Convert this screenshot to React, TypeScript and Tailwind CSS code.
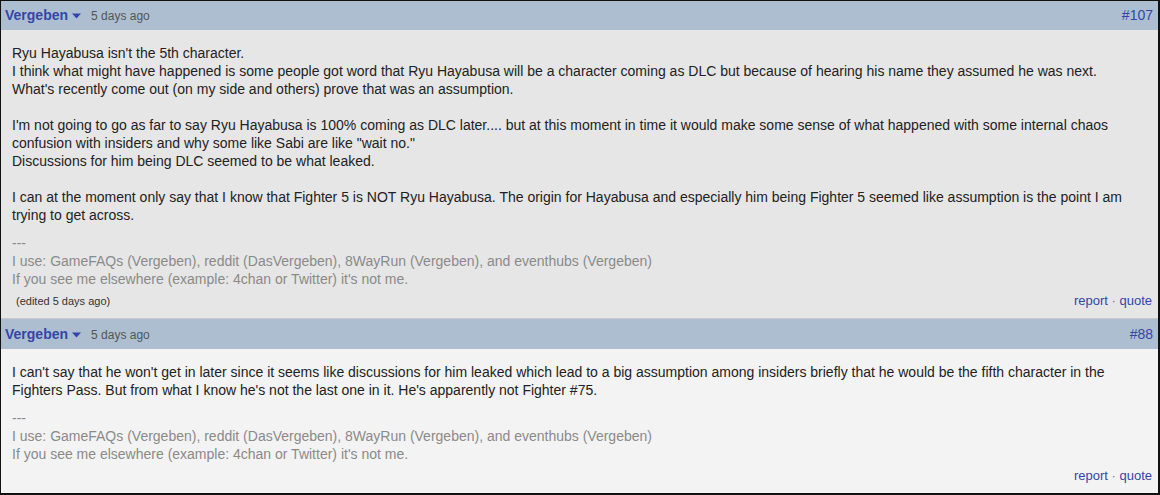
const posts = [
  {
    id: '#107',
    body: 'bg-[#e6e6e6]',
    lines: [
      "Ryu Hayabusa isn't the 5th character.",
      'I think what might have happened is some people got word that Ryu Hayabusa will be a character coming as DLC but because of hearing his name they assumed he was next.',
      "What's recently come out (on my side and others) prove that was an assumption.",
      '',
      "I'm not going to go as far to say Ryu Hayabusa is 100% coming as DLC later.... but at this moment in time it would make some sense of what happened with some internal chaos confusion with insiders and why some like Sabi are like \"wait no.\"",
      'Discussions for him being DLC seemed to be what leaked.',
      '',
      'I can at the moment only say that I know that Fighter 5 is NOT Ryu Hayabusa. The origin for Hayabusa and especially him being Fighter 5 seemed like assumption is the point I am trying to get across.',
    ],
    edited: '(edited 5 days ago)',
  },
  {
    id: '#88',
    body: 'bg-[#f3f3f3]',
    lines: [
      "I can't say that he won't get in later since it seems like discussions for him leaked which lead to a big assumption among insiders briefly that he would be the fifth character in the Fighters Pass. But from what I know he's not the last one in it. He's apparently not Fighter #75.",
    ],
    edited: '',
  },
];

const Post = ({ post, first }: { post: (typeof posts)[number]; first: boolean }) => (
  <div>
    <div
      className={`flex items-center justify-between bg-[#adbed1] pl-[4px] pr-[5px] ${
        first ? 'h-[29px]' : 'h-[31px] border-t border-[#c9c9c9] pt-[1px]'
      }`}
    >
      <div className="flex items-center">
        <span className="text-[14px] font-bold text-[#3545a8]">Vergeben</span>
        <svg width="9" height="6" viewBox="0 0 9 6" className="ml-[4px] mt-[1px]">
          <path d="M0 0.5 L9 0.5 L4.5 5.5 Z" fill="#3545a8" />
        </svg>
        <span className="ml-[10px] text-[12px] text-[#555]">5 days ago</span>
      </div>
      <span className="text-[14px] text-[#3545a8]">{post.id}</span>
    </div>
    <div className={`${post.body} pl-[11px] pr-[6px] pt-[14px] pb-[8px] text-[14px] leading-[18px] text-[#222]`}>
      <div>
        {post.lines.map((l, i) => (
          <div key={i} className="min-h-[18px]">
            {l}
          </div>
        ))}
      </div>
      <div className="mt-[10px] text-[#8a8a8a]">
        <div>---</div>
        <div>I use: GameFAQs (Vergeben), reddit (DasVergeben), 8WayRun (Vergeben), and eventhubs (Vergeben)</div>
        <div>If you see me elsewhere (example: 4chan or Twitter) it's not me.</div>
      </div>
      <div className="mt-[4px] flex h-[18px] items-center justify-between">
        <span className="pl-[4px] text-[11px] text-[#333]">{post.edited}</span>
        <span className="text-[13px] text-[#3545a8]">
          report <span className="text-[#777]">·</span> quote
        </span>
      </div>
    </div>
  </div>
);

export default function App() {
  return (
    <div
      className="h-[495px] w-[1160px] overflow-hidden border-t border-l border-r-2 border-b-2 border-[#111] bg-[#f3f3f3]"
      style={{ fontFamily: '"Liberation Sans", Arial, sans-serif' }}
    >
      {posts.map((p, i) => (
        <Post key={p.id} post={p} first={i === 0} />
      ))}
    </div>
  );
}
